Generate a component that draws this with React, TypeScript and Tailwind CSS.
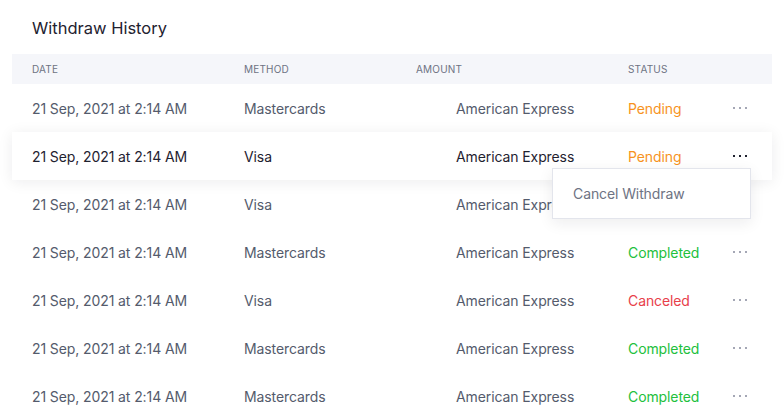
import React from "react";

type Row = { method: string; status: "Pending" | "Completed" | "Canceled" };

const rows: Row[] = [
  { method: "Mastercards", status: "Pending" },
  { method: "Visa", status: "Pending" },
  { method: "Visa", status: "Pending" },
  { method: "Mastercards", status: "Completed" },
  { method: "Visa", status: "Canceled" },
  { method: "Mastercards", status: "Completed" },
  { method: "Mastercards", status: "Completed" },
];

const statusClass: Record<Row["status"], string> = {
  Pending: "text-[#f7931e]",
  Completed: "text-[#22c03c]",
  Canceled: "text-[#e8404a]",
};

function Dots({ dark }: { dark: boolean }) {
  return (
    <svg width="16" height="4" viewBox="0 0 16 4" className="block">
      <rect x="1" y="1" width="2" height="2" fill={dark ? "#1f2230" : "#a4a7b5"} />
      <rect x="7" y="1" width="2" height="2" fill={dark ? "#1f2230" : "#a4a7b5"} />
      <rect x="13" y="1" width="2" height="2" fill={dark ? "#1f2230" : "#a4a7b5"} />
    </svg>
  );
}

export default function App() {
  return (
    <div className="w-[784px] h-[420px] overflow-hidden bg-white font-['Inter',sans-serif]">
      <div className="px-3 pt-4">
        <h1 className="pl-5 text-[16.5px] leading-6 font-normal text-[#1f2230] mb-[14px]">
          Withdraw History
        </h1>
        <div className="grid grid-cols-[212px_172px_212px_104px_1fr] items-center h-[30px] bg-[#f5f6fa] pl-5 text-[10px] uppercase tracking-[0.02em] text-[#6e7383]">
          <div>Date</div>
          <div>Method</div>
          <div>Amount</div>
          <div>Status</div>
          <div></div>
        </div>
        {rows.map((r, i) => {
          const active = i === 1;
          return (
            <div
              key={i}
              className={
                "relative grid grid-cols-[212px_172px_212px_104px_1fr] items-center h-12 pl-5 text-[14px] tracking-[-0.1px] " +
                (active
                  ? "bg-white text-[#1f2230] shadow-[0_2px_14px_rgba(20,25,40,0.08)] z-10"
                  : "text-[#545b6c]")
              }
            >
              <div>21 Sep, 2021 at 2:14 AM</div>
              <div>{r.method}</div>
              <div className="pl-10">American Express</div>
              <div className={statusClass[r.status]}>{r.status}</div>
              <div className="flex items-center">
                <Dots dark={active} />
              </div>
              {active && (
                <div className="absolute left-[540px] top-[36px] w-[199px] h-[51px] bg-white border border-[#e3e5ec] shadow-[0_4px_14px_rgba(20,25,40,0.08)] flex items-center px-5 text-[14px] text-[#6e7383]">
                  Cancel Withdraw
                </div>
              )}
            </div>
          );
        })}
      </div>
    </div>
  );
}
